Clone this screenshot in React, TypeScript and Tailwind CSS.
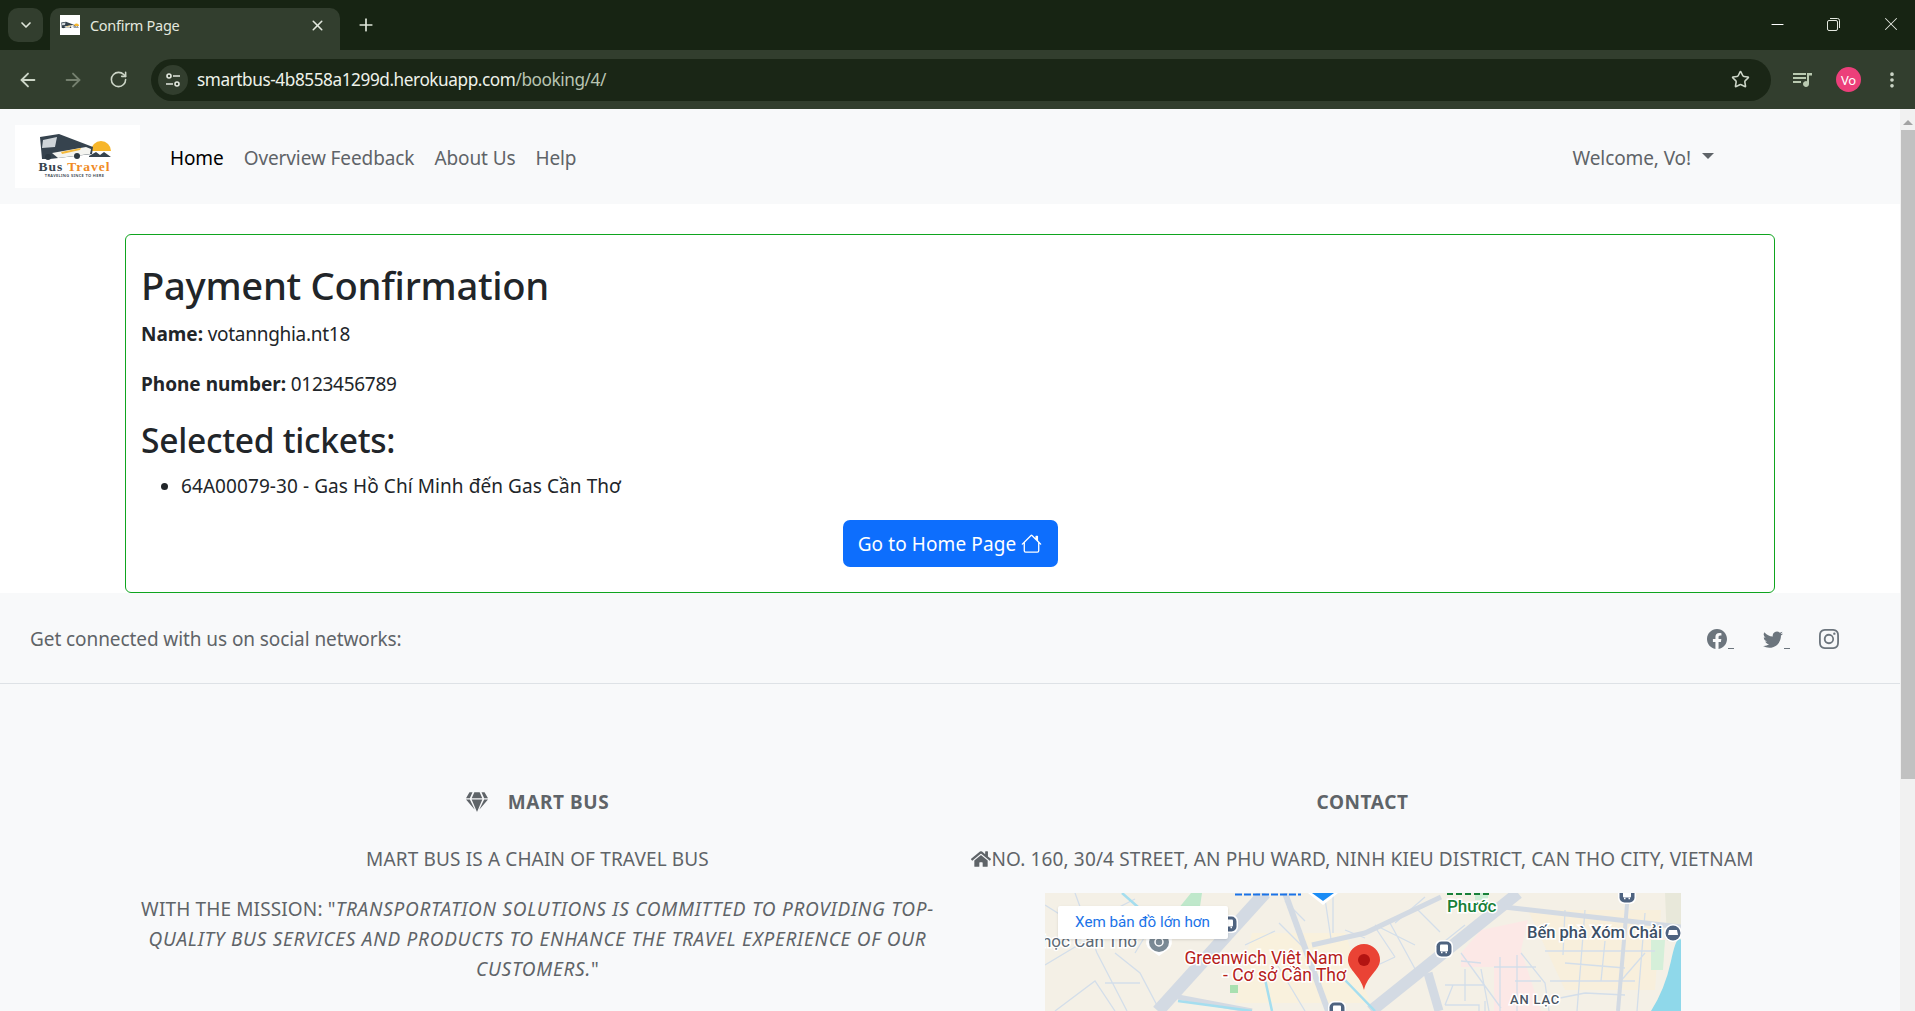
import { ArrowLeft, ArrowRight, ChevronDown, EllipsisVertical, Minus, Plus, RotateCw, Star, X } from 'lucide-react'
import { BsFacebook, BsHouse, BsInstagram, BsTwitter } from 'react-icons/bs'
import { FaGem, FaHome } from 'react-icons/fa'

function TabStrip() {
  return (
    <div className="h-[50px] shrink-0 bg-[#172413] flex items-end relative">
      <div className="absolute left-[8px] top-[8px] w-[35px] h-[34px] rounded-[10px] bg-[#323e2e] flex items-center justify-center text-[#dfe6da]">
        <ChevronDown className="size-4" strokeWidth={2.5} />
      </div>
      <div className="ml-[50px] w-[290px] h-[42px] bg-[#323e2e] rounded-t-[10px] flex items-center pl-[10px] pr-[14px] pb-[8px]">
        <div className="w-[20px] h-[20px] bg-white flex items-center justify-center">
          <BusMark className="w-[18px] h-[14px]" />
        </div>
        <span className="ml-[10px] text-[14.5px] tracking-[-0.02em] text-[#e3e8df] flex-1">Confirm Page</span>
        <X className="size-[17px] text-[#e3e8df]" strokeWidth={2.2} />
      </div>
      <Plus className="absolute left-[356px] top-[15px] size-[20px] text-[#dfe6da]" strokeWidth={2} />
      <Minus className="absolute left-[1768px] top-[15px] size-[19px] text-white" strokeWidth={1.3} />
      <svg className="absolute left-[1827px] top-[18px] size-[13px] text-[#e3e8df]" viewBox="0 0 13 13" fill="none" stroke="currentColor">
        <rect x="0.5" y="2.5" width="10" height="10" rx="1.5" />
        <path d="M3 .5h7.5a2 2 0 0 1 2 2V10" />
      </svg>
      <X className="absolute left-[1880px] top-[13px] size-[22px] text-[#e3e8df]" strokeWidth={1.1} />
    </div>
  )
}

function Toolbar() {
  return (
    <div className="h-[59px] shrink-0 bg-[#323e2e] flex items-center text-[#cdd6c8]">
      <ArrowLeft className="ml-[17px] size-[22px]" strokeWidth={2} />
      <ArrowRight className="ml-[23px] size-[22px] text-[#75806f]" strokeWidth={2} />
      <RotateCw className="ml-[25px] size-[19px]" strokeWidth={2} />
      <div className="ml-[23px] w-[1620px] h-[42px] rounded-full bg-[#1a2616] flex items-center pl-[7px] pr-[21px]">
        <div className="size-[30px] rounded-full bg-[#323e2e] flex items-center justify-center">
          <svg className="size-[16px] text-[#e3e8df]" viewBox="0 0 16 16" fill="none" stroke="currentColor" strokeWidth="1.6">
            <circle cx="4" cy="4" r="2" />
            <path d="M8 4h7M1 12h7" />
            <circle cx="12" cy="12" r="2" />
          </svg>
        </div>
        <div className="ml-[9px] text-[17.2px] tracking-[-0.025em] flex-1">
          <span className="text-[#eef2ea]">smartbus-4b8558a1299d.herokuapp.com</span>
          <span className="text-[#b9c4b2]">/booking/4/</span>
        </div>
        <Star className="size-[19px] text-[#cdd6c8]" strokeWidth={2} />
      </div>
      <svg className="ml-[22px] size-[20px]" viewBox="0 0 20 20" fill="#b9c9b0">
        <path d="M0 3h13v2H0zM0 7h13v2H0zM0 11h8v2H0z" />
        <path d="M14 3h5v2.500h-3V14a3 3 0 1 1-2-2.800z" />
      </svg>
      <div className="ml-[23px] size-[25px] rounded-full bg-[#ec3f7a] text-white text-[13px] flex items-center justify-center">Vo</div>
      <EllipsisVertical className="ml-[21px] size-[20px]" strokeWidth={2.4} />
    </div>
  )
}

function BusMark({ className }: { className?: string }) {
  return (
    <svg className={className} viewBox="0 0 72 26">
      <path d="M52 17a10 10 0 0 1 20 0z" fill="#f7b62b" />
      <path d="M1 3 20 0 54 13l-1 7-42 5H3z" fill="#36434e" />
      <path d="M13 19l34-6 5 2-1 5-32 4z" fill="#f4f4f0" />
      <path d="M22 18l20-4-1 2-18 4z" fill="#f5b93a" />
      <path d="M4 6l14-3-2 10-13 1z" fill="#cfd5d9" />
      <circle cx="9" cy="23" r="3" fill="#2d3942" />
      <circle cx="38" cy="22" r="3" fill="#2d3942" />
      <path d="M50 22l7-4 4 3 4-3 7 5H50z" fill="#36434e" />
    </svg>
  )
}

function Logo() {
  return (
    <div className="w-[125px] h-[63px] bg-white flex flex-col items-center justify-center pr-[6px]">
      <BusMark className="w-[72px] h-[26px]" />
      <div className="font-['Liberation_Serif',serif] font-bold text-[13.5px] leading-[12px] tracking-[1px] mt-[1px] whitespace-nowrap">
        <span className="text-[#36434e]">Bus </span>
        <span className="text-[#f08a24]">Travel</span>
      </div>
      <div className="text-[4px] leading-[6px] tracking-[0.08em] text-[#36434e] font-semibold whitespace-nowrap">TRAVELING SINCE TO HERE</div>
    </div>
  )
}

function Navbar() {
  return (
    <nav className="h-[95px] shrink-0 bg-[#f8f9fa] flex items-center pl-[15px] relative tracking-[-0.1px]">
      <Logo />
      <ul className="ml-[20px] pt-[3px] flex text-[#5f6468]">
        <li className="px-[10px] text-black">Home</li>
        <li className="px-[10px]">Overview Feedback</li>
        <li className="px-[10px]">About Us</li>
        <li className="px-[10px]">Help</li>
      </ul>
      <div className="ml-auto mr-[186px] pt-[3px] flex items-center text-[#5f6468]">
        Welcome, Vo!
        <span className="ml-[11px] mb-[5px] w-0 h-0 border-x-[6px] border-x-transparent border-t-[6px] border-t-[#5f6468]" />
      </div>
    </nav>
  )
}

function ConfirmCard() {
  return (
    <div className="shrink-0 px-[125px] pt-[30px] bg-white">
      <div className="h-[359px] border border-[#0fa51f] rounded-[6px] pt-[26px] px-[15px]">
        <h2 className="text-[38.2px] leading-[48px] font-medium text-[#212529] mb-[10px]">Payment Confirmation</h2>
        <p className="mb-[20px]">
          <strong className="font-bold tracking-normal">Name:</strong> votannghia.nt18
        </p>
        <p className="mb-[20px]">
          <strong className="font-bold tracking-normal">Phone number:</strong> 0123456789
        </p>
        <h3 className="text-[33.6px] leading-[42px] font-medium mb-[10px]">Selected tickets:</h3>
        <ul className="list-disc pl-[40px] mb-[19px] tracking-[0.08px]">
          <li>64A00079-30 - Gas Hồ Chí Minh đến Gas Cần Thơ</li>
        </ul>
        <div className="flex justify-center">
          <button className="h-[47px] w-[215px] bg-[#0d6efd] text-white rounded-[7px] flex items-center justify-center gap-[5px] tracking-[0.1px]">
            Go to Home Page
            <BsHouse className="size-[21px]" />
          </button>
        </div>
      </div>
    </div>
  )
}

function SocialIcon({ children }: { children: React.ReactNode }) {
  return (
    <span className="flex items-end text-[#6c757d]">
      {children}
      <span className="w-[6px] h-[1.5px] bg-[#6c757d] ml-[1px]" />
    </span>
  )
}

function Footer() {
  return (
    <footer className="shrink-0 bg-[#f8f9fa] text-[#5f6468]">
      <div className="h-[91px] border-b border-[#dee2e6] flex items-center pt-[2px] pl-[30px] pr-[61px] tracking-[-0.08px]">
        <span>Get connected with us on social networks:</span>
        <div className="ml-auto flex items-center gap-[29px]">
          <SocialIcon><BsFacebook className="size-[20px]" /></SocialIcon>
          <SocialIcon><BsTwitter className="size-[20px]" /></SocialIcon>
          <BsInstagram className="size-[20px] text-[#6c757d]" />
        </div>
      </div>
      <div className="px-[125px] pt-[103px] grid grid-cols-2 text-center uppercase tracking-[0.14px]">
        <div>
          <h6 className="font-bold mb-[27px] flex items-center justify-center tracking-[0.6px]">
            <FaGem className="size-[22px] mr-[20px]" />
            MART BUS
          </h6>
          <p className="mb-[20px]">Mart Bus is a chain of travel bus</p>
          <p>
            With the mission: "<em className="tracking-[0.75px]">Transportation Solutions is committed to providing top-<br />quality bus services and products to enhance the travel experience of our<br />customers.</em>"
          </p>
        </div>
        <div>
          <h6 className="font-bold mb-[27px] tracking-[0.6px]">Contact</h6>
          <p className="mb-[19px] flex items-center justify-center">
            <FaHome className="size-[20px]" />
            No. 160, 30/4 Street, An Phu Ward, Ninh Kieu District, Can Tho City, Vietnam
          </p>
          <MapEmbed />
        </div>
      </div>
    </footer>
  )
}

function TransitDot({ x, y }: { x: number; y: number }) {
  return (
    <g>
      <rect x={x - 9} y={y - 9} width="18" height="18" rx="6" fill="#fff" />
      <rect x={x - 7.500} y={y - 7.500} width="15" height="15" rx="5" fill="#4e6380" />
      <rect x={x - 4} y={y - 4.500} width="8" height="7" rx="1" fill="#fff" />
      <path d={`M${x - 3} ${y + 3.500}h1.500M${x + 1.500} ${y + 3.500}h1.500`} stroke="#fff" strokeWidth="1.500" />
    </g>
  )
}

function MapEmbed() {
  return (
    <div className="mx-auto w-[636px] h-[118px] relative normal-case tracking-normal overflow-hidden">
      <svg className="block" width="636" height="118" viewBox="0 0 636 118" fontFamily="Roboto, sans-serif" fontSize="16">
        <rect width="636" height="118" fill="#f4f0e6" />
        <path d="M207 40h93l25 70H190z" fill="#f9f1dd" />
        <path d="M483 17h133l-6 80H520z" fill="#f8efdc" />
        <path d="M416 60l20-23 47-10-7 30 20 61h-47V74h-33z" fill="#fce8e6" />
        <path d="M133 16 146 0h11l-3 20z" fill="#bfe8cb" />
        <path d="M185 92h8v8h-8z" fill="#a8e0b0" />
        <path d="M430 0h13v7h-13z" fill="#cdeed5" />
        <path d="M606 47h14l-2 30h-12z" fill="#d5efd9" />
        <path d="M620 0h16v40l-14 8z" fill="#e8e8da" />
        <g fill="none" stroke="#d3deea" strokeWidth="1.300">
          <path d="M0 12l35 22 55-28M30 0l22 60M0 72l50-30M52 60l30 58M10 118l40-30 20 30M70 60l25 20 20 38M60 90h35M90 60l18-30M200 52l30-14M234 30l25 25M240 8l20 20M280 6l6 40M288 0v40M260 118l-30-50M320 45l-20-8M330 32l40 20M320 78l30-14M350 64l-20-30M345 30l30 55M380 4l-30 26M370 14l25 25M400 48l20-16" />
          <path d="M400 92h40M408 92l-8 20M420 76v32M400 112h34v6M440 108v10M436 76l8 42M455 64v54M472 62v56M449 74h42M470 88h26M416 68l20 2M416 60l40 55M476 60l24 30 4 28" />
          <path d="M520 17l-2 45M540 17l-8 101M500 58h110M520 70l60 5M505 88h85M540 100l40 2M560 48l-4 40M600 20l-8 98M600 60l-26 30M500 108l40-8" />
        </g>
        <g fill="none" stroke="#d3dae3">
          <path d="M220 0 113 118" strokeWidth="13" />
          <path d="M473 0 326 118" strokeWidth="12" />
          <path d="M240 0l43 118" strokeWidth="6" />
          <path d="M267 52l53-12 76-36" strokeWidth="5" />
          <path d="M396 4l64 0" strokeWidth="0" />
          <path d="M459 14 636 34" strokeWidth="5" />
          <path d="M583 0l-10 118" strokeWidth="4" />
          <path d="M383 80l11 38" strokeWidth="9" />
          <path d="M133 104l74 14" strokeWidth="5" />
        </g>
        <g fill="none" stroke="#a5deef" strokeWidth="2.500">
          <path d="M77 0l16 14M218 77l9 41M300 87l30 31M133 108l74 10" />
        </g>
        <path d="M636 47v71h-30q14-22 20-50t10-21z" fill="#8fd8ea" />
        <path d="M190 1.500h66" stroke="#1a73e8" strokeWidth="2" strokeDasharray="7 2" />
        <path d="M402 1h42" stroke="#188038" strokeWidth="2" strokeDasharray="6 3" />
        <path d="M263 0h30l-15 12z" fill="#fff" />
        <path d="M267 0h22l-11 8z" fill="#1a8cf5" />
        <g stroke="#fff" strokeWidth="3" paintOrder="stroke">
          <text x="402" y="19" fill="#188038" fontSize="17" fontWeight="500">Phước</text>
          <text x="482" y="45" fill="#3c5066" fontSize="16.500" fontWeight="500">Bến phà Xóm Chải</text>
          <text x="465" y="111" fill="#4a5563" fontSize="13" fontWeight="500" letterSpacing="0.8">AN LẠC</text>
          <text x="-3" y="54" fill="#5f6b76" fontSize="17">học Cần Thơ</text>
          <text x="298" y="71" fill="#b5211a" fontSize="17.500" textAnchor="end">Greenwich Việt Nam</text>
          <text x="301" y="88" fill="#b5211a" fontSize="17.500" textAnchor="end">- Cơ sở Cần Thơ</text>
        </g>
        <TransitDot x={399} y={56} />
        <TransitDot x={184} y={31} />
        <TransitDot x={292} y={117} />
        <TransitDot x={582} y={2} />
        <circle cx="628" cy="40" r="9" fill="#fff" />
        <circle cx="628" cy="40" r="7.500" fill="#4e6380" />
        <path d="M624 37h8l1 5h-10z" fill="#fff" />
        <path d="M114 63 103 55a13 13 0 1 1 22 0z" fill="#fff" />
        <circle cx="114" cy="49" r="10" fill="#7b8a95" />
        <circle cx="114" cy="49" r="4" fill="none" stroke="#fff" strokeWidth="1.500" />
        <path d="M319 97c-3-14-16-20-16-30a16 16 0 0 1 32 0c0 10-13 16-16 30z" fill="#ea4335" />
        <circle cx="319" cy="67" r="6" fill="#b31412" />
      </svg>
      <div className="absolute left-[13px] top-[13px] w-[170px] h-[33px] bg-white rounded-[2px] flex items-center justify-center font-['Roboto',sans-serif] text-[15.2px] leading-none text-[#1a73e8] shadow-sm">
        Xem bản đồ lớn hơn
      </div>
    </div>
  )
}

function Scrollbar() {
  return (
    <div className="w-[15px] shrink-0 bg-[#f1f1f1] flex flex-col items-center pt-[11px]">
      <span className="w-0 h-0 border-x-[5px] border-x-transparent border-b-[5px] border-b-[#a3a3a3]" />
      <div className="mt-[5px] w-[14px] ml-[1px] h-[649px] bg-[#c1c1c1]" />
    </div>
  )
}

export default function App() {
  return (
    <div className="w-[1915px] h-[1011px] overflow-hidden flex flex-col bg-white font-['Noto_Sans',sans-serif] text-[19px] leading-[30px] tracking-[-0.015em] text-[#212529]">
      <TabStrip />
      <Toolbar />
      <div className="flex-1 flex min-h-0">
        <main className="flex-1 flex flex-col min-w-0 overflow-hidden">
          <Navbar />
          <ConfirmCard />
          <Footer />
        </main>
        <Scrollbar />
      </div>
    </div>
  )
}
